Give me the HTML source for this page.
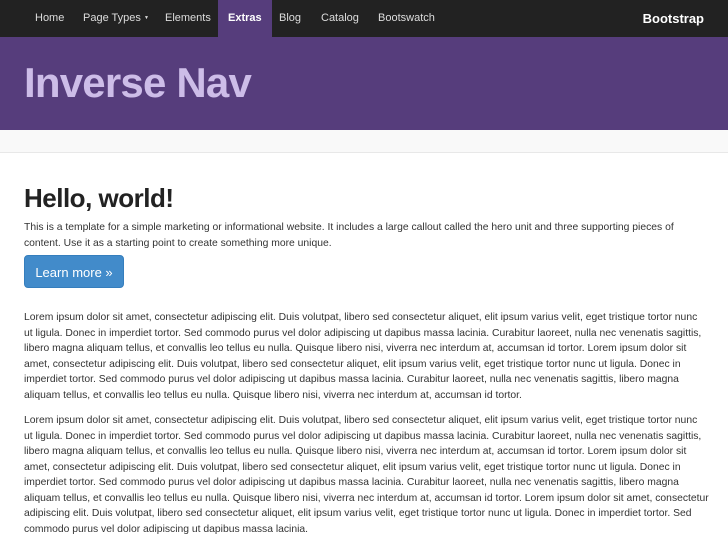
<!DOCTYPE html>
<html><head><style>
body{margin:0;font-family:"Liberation Sans",sans-serif;background:#fff;color:#333;width:728px;height:544px;overflow:hidden}
.nav{height:37px;background:#222;position:relative}
.nav a{position:absolute;top:0;height:37px;line-height:37px;font-size:11px;color:#ddd;text-decoration:none}
.nav .act{background:#563d7c;color:#fff;font-weight:bold;padding:0 10px}
.brand{right:24px;font-weight:bold;font-size:13px!important;color:#fff!important}
.hero{height:93px;background:#563d7c;position:relative}
.hero h1{margin:0;position:absolute;left:24px;top:22px;font-size:42px;color:#cdbde8;font-weight:bold;letter-spacing:-.8px}
.sub{height:22px;background:#f9f9f9;border-bottom:1px solid #e8e8e8}
h2{position:absolute;left:24px;top:183px;margin:0;font-size:26px;font-weight:bold;color:#222;letter-spacing:-.5px}
.p{position:absolute;left:24px;font-size:10.35px;line-height:15.5px;white-space:nowrap;color:#333}
.btn{position:absolute;left:24px;top:255px;width:100px;height:33px;background:#428bca;border:1px solid #357ebd;border-radius:4px;color:#fff;font-size:13px;line-height:33px;text-align:center;box-sizing:border-box}
</style></head><body>
<div class="nav">
<a style="left:35px">Home</a>
<a style="left:83px">Page Types <span style="font-size:5px;vertical-align:2px">▼</span></a>
<a style="left:165px">Elements</a>
<a class="act" style="left:218px">Extras</a>
<a style="left:279px">Blog</a>
<a style="left:321px">Catalog</a>
<a style="left:378px">Bootswatch</a>
<a class="brand">Bootstrap</a>
</div>
<div class="hero"><h1>Inverse Nav</h1></div>
<div class="sub"></div>
<h2>Hello, world!</h2>
<div class="p" style="top:220px">This is a template for a simple marketing or informational website. It includes a large callout called the hero unit and three supporting pieces of<br>content. Use it as a starting point to create something more unique.</div>
<div class="btn">Learn more »</div>
<div class="p" style="top:310px">Lorem ipsum dolor sit amet, consectetur adipiscing elit. Duis volutpat, libero sed consectetur aliquet, elit ipsum varius velit, eget tristique tortor nunc<br>ut ligula. Donec in imperdiet tortor. Sed commodo purus vel dolor adipiscing ut dapibus massa lacinia. Curabitur laoreet, nulla nec venenatis sagittis,<br>libero magna aliquam tellus, et convallis leo tellus eu nulla. Quisque libero nisi, viverra nec interdum at, accumsan id tortor. Lorem ipsum dolor sit<br>amet, consectetur adipiscing elit. Duis volutpat, libero sed consectetur aliquet, elit ipsum varius velit, eget tristique tortor nunc ut ligula. Donec in<br>imperdiet tortor. Sed commodo purus vel dolor adipiscing ut dapibus massa lacinia. Curabitur laoreet, nulla nec venenatis sagittis, libero magna<br>aliquam tellus, et convallis leo tellus eu nulla. Quisque libero nisi, viverra nec interdum at, accumsan id tortor.</div>
<div class="p" style="top:413px">Lorem ipsum dolor sit amet, consectetur adipiscing elit. Duis volutpat, libero sed consectetur aliquet, elit ipsum varius velit, eget tristique tortor nunc<br>ut ligula. Donec in imperdiet tortor. Sed commodo purus vel dolor adipiscing ut dapibus massa lacinia. Curabitur laoreet, nulla nec venenatis sagittis,<br>libero magna aliquam tellus, et convallis leo tellus eu nulla. Quisque libero nisi, viverra nec interdum at, accumsan id tortor. Lorem ipsum dolor sit<br>amet, consectetur adipiscing elit. Duis volutpat, libero sed consectetur aliquet, elit ipsum varius velit, eget tristique tortor nunc ut ligula. Donec in<br>imperdiet tortor. Sed commodo purus vel dolor adipiscing ut dapibus massa lacinia. Curabitur laoreet, nulla nec venenatis sagittis, libero magna<br>aliquam tellus, et convallis leo tellus eu nulla. Quisque libero nisi, viverra nec interdum at, accumsan id tortor. Lorem ipsum dolor sit amet, consectetur<br>adipiscing elit. Duis volutpat, libero sed consectetur aliquet, elit ipsum varius velit, eget tristique tortor nunc ut ligula. Donec in imperdiet tortor. Sed<br>commodo purus vel dolor adipiscing ut dapibus massa lacinia.</div>
</body></html>
